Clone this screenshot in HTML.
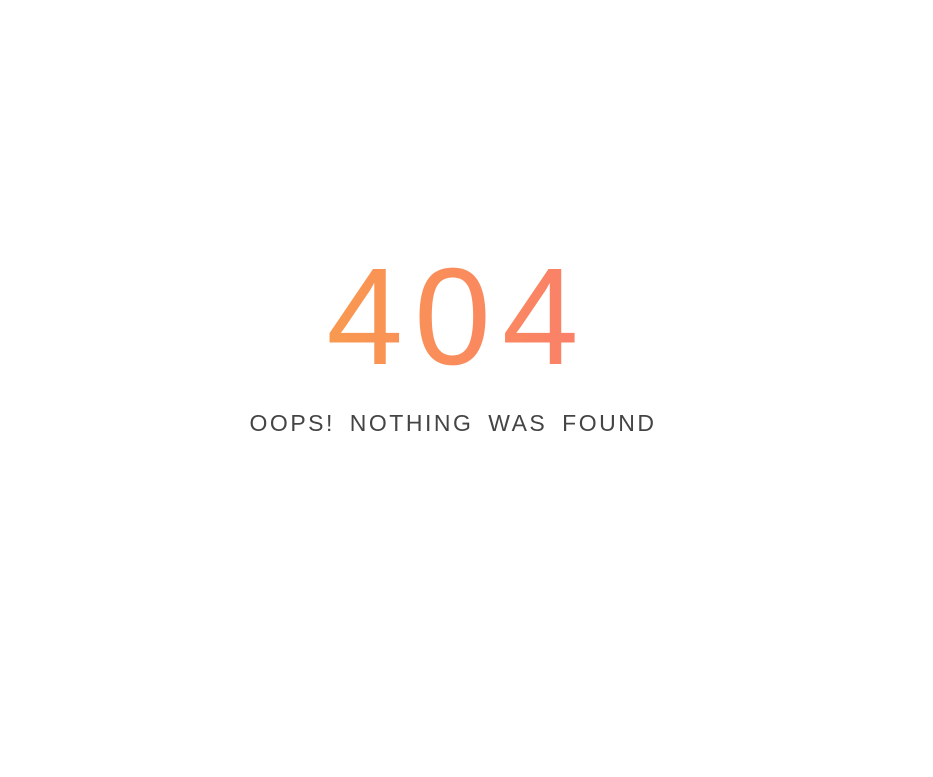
<!DOCTYPE html>
<html><head><style>
html,body{margin:0;padding:0;background:#fff;width:933px;height:777px;overflow:hidden}
.n{position:absolute;left:0;width:916px;top:237px;text-align:center;font-family:"Liberation Sans",sans-serif;font-size:138px;line-height:160px;letter-spacing:11px;font-weight:normal;
background:linear-gradient(90deg,#f99a4f 35%,#fa7e6a 65%);-webkit-background-clip:text;background-clip:text;color:transparent}
.s{position:absolute;left:0;width:906px;top:409px;text-align:center;font-family:"Liberation Sans",sans-serif;font-size:23px;line-height:28px;letter-spacing:2.5px;word-spacing:6px;color:#444}
</style></head><body>
<div class="n">404</div>
<div class="s">OOPS! NOTHING WAS FOUND</div>
</body></html>
